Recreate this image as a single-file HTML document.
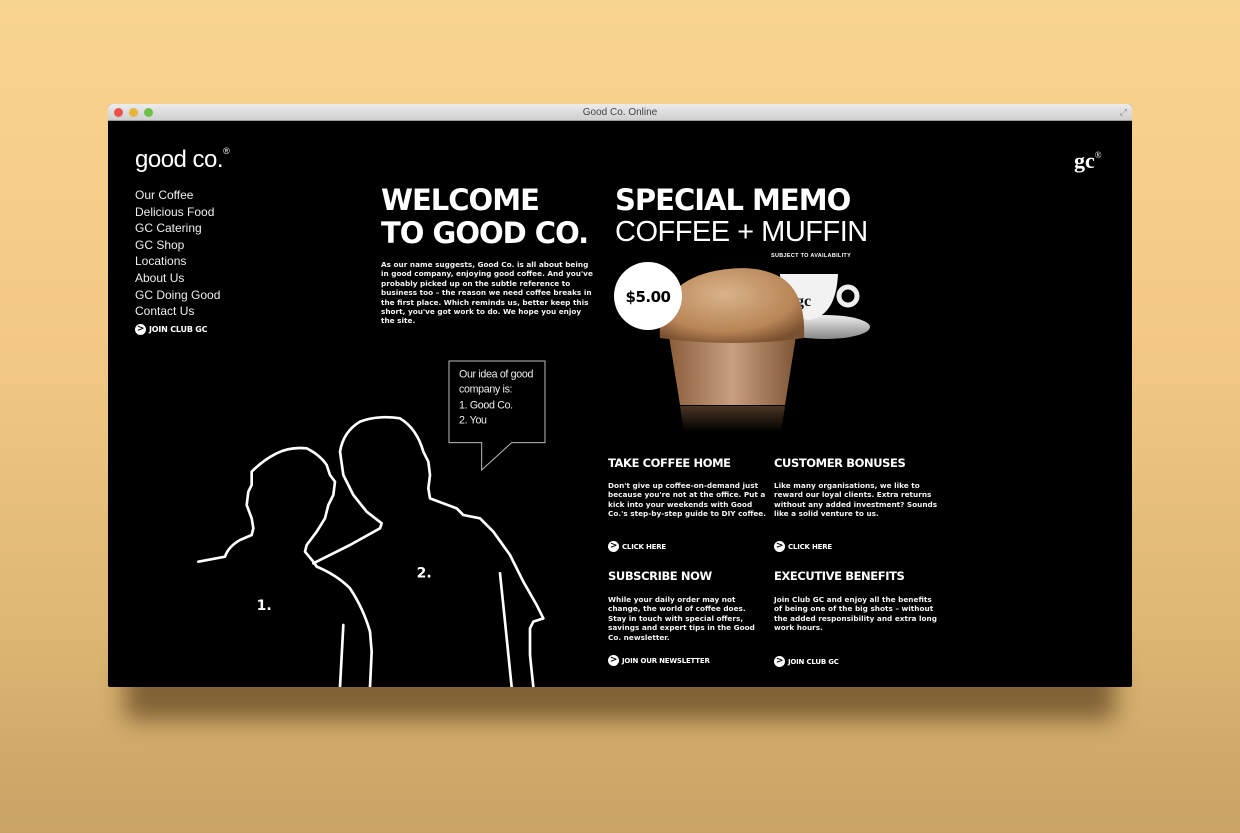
<!DOCTYPE html>
<html><head><meta charset="utf-8"><style>
*{margin:0;padding:0;box-sizing:border-box}
body{width:1240px;height:833px;overflow:hidden;position:relative;background:linear-gradient(180deg,#f9d48f 0%,#f3c985 40%,#deb774 75%,#c9a265 100%);font-family:"Liberation Sans",sans-serif}
.shadow{position:absolute;left:125px;top:655px;width:990px;height:65px;background:rgba(70,45,15,.6);filter:blur(12px)}
.win{position:absolute;left:108px;top:104px;width:1024px;height:583px;background:#000;border-radius:4px 4px 2px 2px;overflow:hidden}
.tb{height:17px;background:linear-gradient(#ececec,#cfcfcf);border-bottom:1px solid #999;text-align:center;font-size:10px;color:#444;line-height:17px;position:relative}
.dot{position:absolute;top:4px;width:9px;height:9px;border-radius:50%}
.a{position:absolute;color:#fff}
.nav{left:27px;top:83px;font-size:12px;line-height:16.6px;color:#eee}
.h{font-family:"DejaVu Sans",sans-serif;font-weight:bold;letter-spacing:-1px}
.body{font-family:"DejaVu Sans",sans-serif;font-size:7.3px;line-height:9.4px;color:#f2f2f2;font-weight:bold}
.btn{font-family:"DejaVu Sans",sans-serif;font-weight:bold;font-size:7px;display:flex;align-items:center;gap:3px;letter-spacing:-.2px}
.btn i{display:inline-block;width:11px;height:11px;border-radius:50%;background:#fff;color:#000;font-style:normal;font-size:9px;line-height:11px;text-align:center;font-weight:bold}
.sh{font-size:11.5px;letter-spacing:-.4px}
</style></head><body>
<div class="shadow"></div>
<div class="win">
<div class="tb"><span class="dot" style="left:6px;background:#e9514a"></span><span class="dot" style="left:21px;background:#e8b43a"></span><span class="dot" style="left:36px;background:#6cc04a"></span>Good Co. Online<span style="position:absolute;right:5px;top:0;color:#888;font-size:9px">⤢</span></div>

<div class="a" style="left:27px;top:42px;font-size:24px;letter-spacing:-.5px">good co.<sup style="font-size:9px;vertical-align:13px">®</sup></div>
<div class="a" style="left:966px;top:44px;font-size:22px;font-weight:bold;font-family:'Liberation Serif',serif">gc<sup style="font-size:9px;vertical-align:10px;font-weight:normal">®</sup></div>

<div class="a nav">Our Coffee<br>Delicious Food<br>GC Catering<br>GC Shop<br>Locations<br>About Us<br>GC Doing Good<br>Contact Us</div>
<div class="a btn" style="left:27px;top:220px;font-size:8px"><i>&gt;</i>JOIN CLUB GC</div>

<div class="a h" style="left:273px;top:80px;font-size:29px;line-height:33px">WELCOME<br>TO GOOD CO.</div>
<div class="a body" style="left:273px;top:156px;width:216px">As our name suggests, Good Co. is all about being in good company, enjoying good coffee. And you've probably picked up on the subtle reference to business too – the reason we need coffee breaks in the first place. Which reminds us, better keep this short, you've got work to do. We hope you enjoy the site.</div>

<div class="a h" style="left:507px;top:80px;font-size:29px;line-height:33px">SPECIAL MEMO</div>
<div class="a" style="left:507px;top:112px;font-size:29px;line-height:33px;font-weight:300;letter-spacing:-.5px">COFFEE + MUFFIN</div>
<div class="a" style="left:663px;top:149px;font-size:5.5px;font-weight:bold;letter-spacing:.3px">SUBJECT TO AVAILABILITY</div>

<svg class="a" style="left:500px;top:150px" width="280" height="180" viewBox="0 0 280 180">
<defs>
<radialGradient id="m" cx=".45" cy=".35" r=".7"><stop offset="0" stop-color="#d9b38a"/><stop offset=".7" stop-color="#b88556"/><stop offset="1" stop-color="#7a5030"/></radialGradient>
<linearGradient id="w" x1="0" x2="1"><stop offset="0" stop-color="#8a5c3a"/><stop offset=".5" stop-color="#c8a080"/><stop offset="1" stop-color="#7d5535"/></linearGradient>
<linearGradient id="r" x1="0" y1="0" x2="0" y2="1"><stop offset="0" stop-color="#4a3422"/><stop offset="1" stop-color="#000"/></linearGradient>
<linearGradient id="s" x1="0" y1="0" x2="0" y2="1"><stop offset="0" stop-color="#eee"/><stop offset="1" stop-color="#888"/></linearGradient>
</defs>
<ellipse cx="217" cy="73" rx="45" ry="12" fill="url(#s)"/>
<path d="M172 20 h58 q-2 42 -29 46 q-27 -4 -29 -46z" fill="#f2f2f2"/>
<circle cx="240" cy="42" r="9" fill="none" stroke="#eee" stroke-width="5"/>
<text x="188" y="52" font-family="Liberation Serif" font-weight="bold" font-size="16" fill="#111">gc</text>
<path d="M60 76 h129 l-12 75 h-105z" fill="url(#w)"/>
<path d="M72 152 h105 l-4 26 h-97z" fill="url(#r)"/>
<path d="M52 84 q-4 -52 50 -66 q45 -10 72 6 q24 16 22 60 q-70 10 -144 0z" fill="url(#m)"/>
<circle cx="40" cy="42" r="34" fill="#fff"/>
<text x="40" y="48" text-anchor="middle" font-family="DejaVu Sans" font-weight="bold" font-size="15" fill="#000" letter-spacing="-.5">$5.00</text>
</svg>

<div class="a h sh" style="left:500px;top:352px">TAKE COFFEE HOME</div>
<div class="a body" style="left:500px;top:377px;width:162px">Don't give up coffee-on-demand just because you're not at the office. Put a kick into your weekends with Good Co.'s step-by-step guide to DIY coffee.</div>
<div class="a btn" style="left:500px;top:437px"><i>&gt;</i>CLICK HERE</div>
<div class="a h sh" style="left:666px;top:352px">CUSTOMER BONUSES</div>
<div class="a body" style="left:666px;top:377px;width:166px">Like many organisations, we like to reward our loyal clients. Extra returns without any added investment? Sounds like a solid venture to us.</div>
<div class="a btn" style="left:666px;top:437px"><i>&gt;</i>CLICK HERE</div>

<div class="a h sh" style="left:500px;top:465px">SUBSCRIBE NOW</div>
<div class="a body" style="left:500px;top:491px;width:150px">While your daily order may not change, the world of coffee does. Stay in touch with special offers, savings and expert tips in the Good Co. newsletter.</div>
<div class="a btn" style="left:500px;top:551px"><i>&gt;</i>JOIN OUR NEWSLETTER</div>
<div class="a h sh" style="left:666px;top:465px">EXECUTIVE BENEFITS</div>
<div class="a body" style="left:666px;top:491px;width:166px">Join Club GC and enjoy all the benefits of being one of the big shots – without the added responsibility and extra long work hours.</div>
<div class="a btn" style="left:666px;top:552px"><i>&gt;</i>JOIN CLUB GC</div>
</div>

<svg style="position:absolute;left:190px;top:355px" width="370" height="332" viewBox="0 0 1110 996">
<g fill="none" stroke="#fff" stroke-width="8" stroke-linejoin="round" stroke-linecap="round">
<path d="M25 620 L105 605 Q115 575 150 555 L185 540 L190 520 L185 490 L170 450 L175 410 L185 390 L185 350 Q220 315 260 295 Q300 275 350 280 Q390 300 410 330 L420 360 L435 380 L430 420 L415 450 L405 490 L380 530 L350 570 L345 590 L370 620 L380 635 Q440 660 480 700 Q520 760 540 830 L545 890 L540 996"/>
<path d="M460 810 L450 996"/>
<path d="M370 625 L480 570 L570 520 L575 505 L530 470 L490 420 L460 360 L450 290 Q460 230 510 200 Q560 180 630 190 Q680 220 700 290 L715 320 L720 360 L715 400 L720 430 L760 445 L800 460 L820 480 L870 490 L910 530 L960 600 L1000 680 L1040 750 L1060 790 L1030 800 L1020 820 L1020 900 L1030 996"/>
<path d="M930 655 L945 800 L965 996"/>
</g>
<path d="M777 18 H1065 V263 H965 L875 345 V263 H777 Z" fill="#000" stroke="#bbb" stroke-width="3"/>
<text font-family="Liberation Sans" font-size="32" fill="#eee" letter-spacing="-1"><tspan x="807" y="68">Our idea of good</tspan><tspan x="807" y="113">company is:</tspan><tspan x="807" y="160">1. Good Co.</tspan><tspan x="807" y="205">2. You</tspan></text>
<text x="200" y="765" font-family="DejaVu Sans" font-weight="bold" font-size="42" fill="#fff">1.</text>
<text x="680" y="668" font-family="DejaVu Sans" font-weight="bold" font-size="42" fill="#fff">2.</text>
</svg>
</body></html>
